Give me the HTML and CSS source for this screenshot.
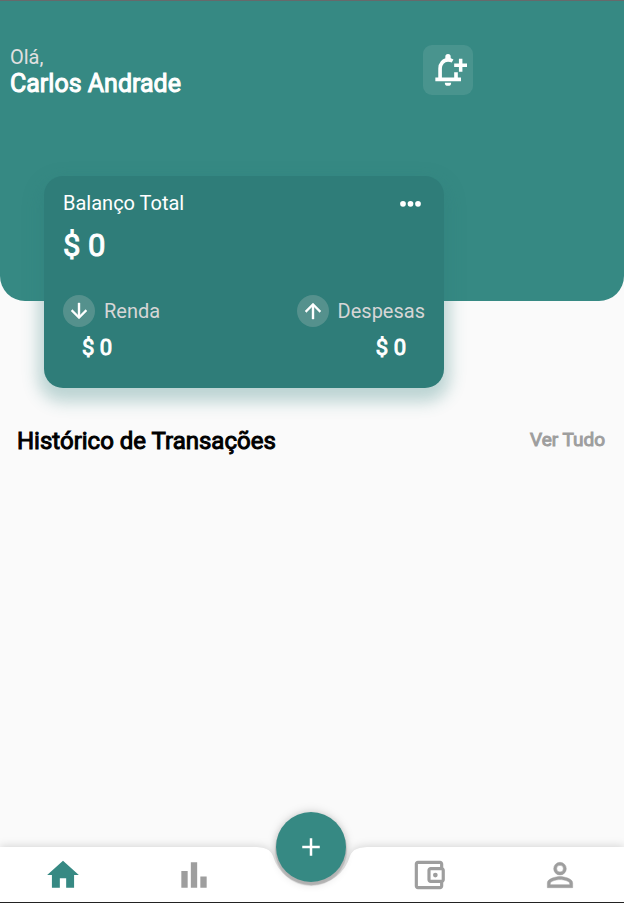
FILE: index.html
```html
<!DOCTYPE html>
<html lang="pt-BR">
<head>
<meta charset="utf-8">
<meta name="viewport" content="width=device-width, initial-scale=1">
<title>Carteira</title>
<link rel="stylesheet" href="styles.css">
</head>
<body>
<main class="content">
  <header class="hero">
    <div class="greeting">
      <p class="hello">Olá,</p>
      <h1 class="name">Carlos Andrade</h1>
    </div>
    <button class="notify" type="button" aria-label="Notificações">
      <svg class="icon" viewBox="0 0 24 24" aria-hidden="true"><path d="M7 18v-7c0-2.900 2-5.400 5-5.400 1.100 0 2 .2 2.900.7" fill="none" stroke="currentColor" stroke-width="2.300"/><path d="M10.300 5V3.600a1.700 1.700 0 0 1 3.400 0V5zM4 16.800h16.200v2.300H4zM15.900 13.400h2.300V17h-2.300zM10 20h4a2 2 0 0 1-4 0zM18.900 4.900h2.200v3h3v2.200h-3v3h-2.200v-3h-3V7.900h3z"/></svg>
    </button>
  </header>

  <section class="card" aria-label="Balanço">
    <div class="row">
      <h2 class="card-title">Balanço Total</h2>
      <button class="more" type="button" aria-label="Mais opções">
        <svg class="icon-md" viewBox="0 0 24 24" aria-hidden="true"><circle cx="6.400" cy="12.600" r="2.300"/><circle cx="12.400" cy="12.600" r="2.300"/><circle cx="18.400" cy="12.600" r="2.300"/></svg>
      </button>
    </div>
    <p class="total">$ 0</p>
    <div class="row flows">
      <div class="flow">
        <span class="badge"><svg class="icon-sm" viewBox="0 0 24 24" aria-hidden="true"><path stroke="currentColor" stroke-width=".4" d="m20 12-1.410-1.410L13 16.170V4h-2v12.170l-5.580-5.590L4 12l8 8z"/></svg></span>
        <span class="flow-label">Renda</span>
      </div>
      <div class="flow">
        <span class="badge"><svg class="icon-sm" viewBox="0 0 24 24" aria-hidden="true"><path stroke="currentColor" stroke-width=".4" d="m4 12 1.410 1.410L11 7.830V20h2V7.830l5.580 5.590L20 12l-8-8z"/></svg></span>
        <span class="flow-label">Despesas</span>
      </div>
    </div>
    <div class="row amounts">
      <span>$ 0</span>
      <span>$ 0</span>
    </div>
  </section>

  <section class="history">
    <h2 class="history-title">Histórico de Transações</h2>
    <a class="see-all" href="#">Ver Tudo</a>
  </section>
</main>

<nav class="tabs" aria-label="Principal">
  <div class="tab-group tab-group-start">
    <a class="tab tab-active" href="#" aria-label="Início"><svg class="icon" viewBox="0 0 24 24" aria-hidden="true"><path d="M10 20v-6h4v6h5v-8h3L12 3 2 12h3v8z"/></svg></a>
    <a class="tab" href="#" aria-label="Estatísticas"><svg class="icon" viewBox="0 0 24 24" aria-hidden="true"><path d="M4 9.500h4V20H4zM16 13h4v7h-4zM10 4h4v16h-4z"/></svg></a>
  </div>
  <div class="dock">
    <svg class="notch" viewBox="0 0 120 55" aria-hidden="true"><path d="M0 0C13 0 18 2 21 9A40 40 0 0 0 98 9C101 2 106 0 120 0V55H0z"/></svg>
    <button class="fab" type="button" aria-label="Adicionar"><svg class="icon-md" viewBox="0 0 24 24" aria-hidden="true"><path d="M19 13h-6v6h-2v-6H5v-2h6V5h2v6h6z"/></svg></button>
  </div>
  <div class="tab-group tab-group-end">
    <a class="tab" href="#" aria-label="Carteira"><svg class="icon" viewBox="0 0 24 24" aria-hidden="true"><path d="M21 7.280V5c0-1.100-.9-2-2-2H5c-1.110 0-2 .9-2 2v14c0 1.100.89 2 2 2h14c1.100 0 2-.9 2-2v-2.280c.59-.35 1-.98 1-1.720V9c0-.74-.41-1.370-1-1.720zM20 9v6h-7V9h7zM5 19V5h14v2h-6c-1.100 0-2 .9-2 2v6c0 1.100.9 2 2 2h6v2H5z"/><circle cx="16" cy="12" r="1.500"/></svg></a>
    <a class="tab" href="#" aria-label="Perfil"><svg class="icon" viewBox="0 0 24 24" aria-hidden="true"><path fill-rule="evenodd" d="M12 4a4 4 0 1 0 0 8 4 4 0 0 0 0-8zM12 5.900a2.100 2.100 0 1 1 0 4.200 2.100 2.100 0 0 1 0-4.200zM12 13c-2.670 0-8 1.340-8 4v3h16v-3c0-2.660-5.330-4-8-4zM12 14.900c2.970 0 6.100 1.460 6.100 2.100v1.100H5.900V17c0-.64 3.130-2.100 6.100-2.100z" stroke="currentColor" stroke-width=".3"/></svg></a>
  </div>
</nav>
</body>
</html>
```
FILE: styles.css
```css
:root {
  --teal: #368983;
  --teal-dark: #2f7d79;
  --grey: #9e9e9e;
}

* {
  box-sizing: border-box;
}

body {
  margin: 0;
  min-height: 100vh;
  display: flex;
  flex-direction: column;
  background: #fafafa;
  font-family: Roboto, "Liberation Sans", sans-serif;
  font-size: 20px;
  line-height: 24px;
  overflow-x: hidden;
}

h1, h2, p {
  margin: 0;
}

button {
  padding: 0;
  border: 0;
  color: #fff;
  background: none;
  display: grid;
  place-items: center;
}

a {
  color: var(--grey);
  text-decoration: none;
}

svg {
  display: block;
  fill: currentColor;
}

.icon {
  width: 38px;
  height: 38px;
}

.icon-md {
  width: 30px;
  height: 30px;
}

.icon-sm {
  width: 24px;
  height: 24px;
}

.content {
  flex: 1;
}

.hero {
  height: 301px;
  padding: 44px 151px 0 10px;
  display: flex;
  justify-content: space-between;
  align-items: flex-start;
  color: #fff;
  background: var(--teal);
  border-top: 1px solid #67696b;
  border-radius: 0 0 25px 25px;
}

.hello {
  color: #e0e0e0;
}

/* Heavier strokes on the regular cut, which keeps its narrower widths. */
.name,
.total,
.amounts,
.history-title {
  font-weight: 400;
  -webkit-text-stroke: 1px currentColor;
}

.name {
  font-size: 25px;
  line-height: 29px;
}

.notify {
  width: 50px;
  height: 50px;
  border-radius: 9px;
  background: rgba(250, 250, 250, 0.1);
}

.card {
  position: relative;
  width: 400px;
  margin: -125px 0 0 44px;
  padding: 12px 19px 26px;
  color: #fff;
  background: var(--teal-dark);
  border-radius: 19px;
  box-shadow: 0 8px 16px 6px rgba(47, 125, 121, 0.3);
}

.row {
  display: flex;
  justify-content: space-between;
  align-items: center;
}

.card-title {
  font-size: 20px;
  font-weight: 400;
}

.total {
  margin-top: 8px;
  font-size: 31px;
  line-height: 40px;
}

.flows {
  margin-top: 29px;
}

.flow {
  display: flex;
  align-items: center;
  gap: 9px;
}

.badge {
  width: 32px;
  height: 32px;
  display: grid;
  place-items: center;
  border-radius: 50%;
  background: #55918d;
}

.flow-label {
  color: #d6d6d6;
}

.amounts {
  margin-top: 7px;
  padding: 0 19px;
  font-size: 22px;
  line-height: 28px;
}

.history {
  display: flex;
  justify-content: space-between;
  align-items: flex-start;
  padding: 38px 19px 0 17px;
}

.history-title {
  font-size: 24px;
  line-height: 30px;
}

.see-all {
  font-size: 19px;
  line-height: 28px;
  -webkit-text-stroke: 1px currentColor;
}

.tabs {
  height: 56px;
  display: flex;
  border-bottom: 1px solid #222;
  filter: drop-shadow(0 -1px 4px rgba(0, 0, 0, 0.15));
}

.tab-group {
  flex: 1;
  display: flex;
  justify-content: space-between;
  align-items: center;
  background: #fff;
}

.tab-group-start {
  padding: 0 39px 0 44px;
}

.tab-group-end {
  padding: 0 45px 0 38px;
}

.tab-active {
  color: var(--teal);
}

.dock {
  position: relative;
  width: 120px;
}

.notch {
  width: 120px;
  height: 55px;
  color: #fff;
}

.fab {
  position: absolute;
  top: -35px;
  left: 24px;
  width: 70px;
  height: 70px;
  border-radius: 50%;
  background: var(--teal);
  box-shadow: 0 3px 1px 1px rgba(0, 0, 0, 0.14), 0 3px 8px rgba(0, 0, 0, 0.12);
}
```
